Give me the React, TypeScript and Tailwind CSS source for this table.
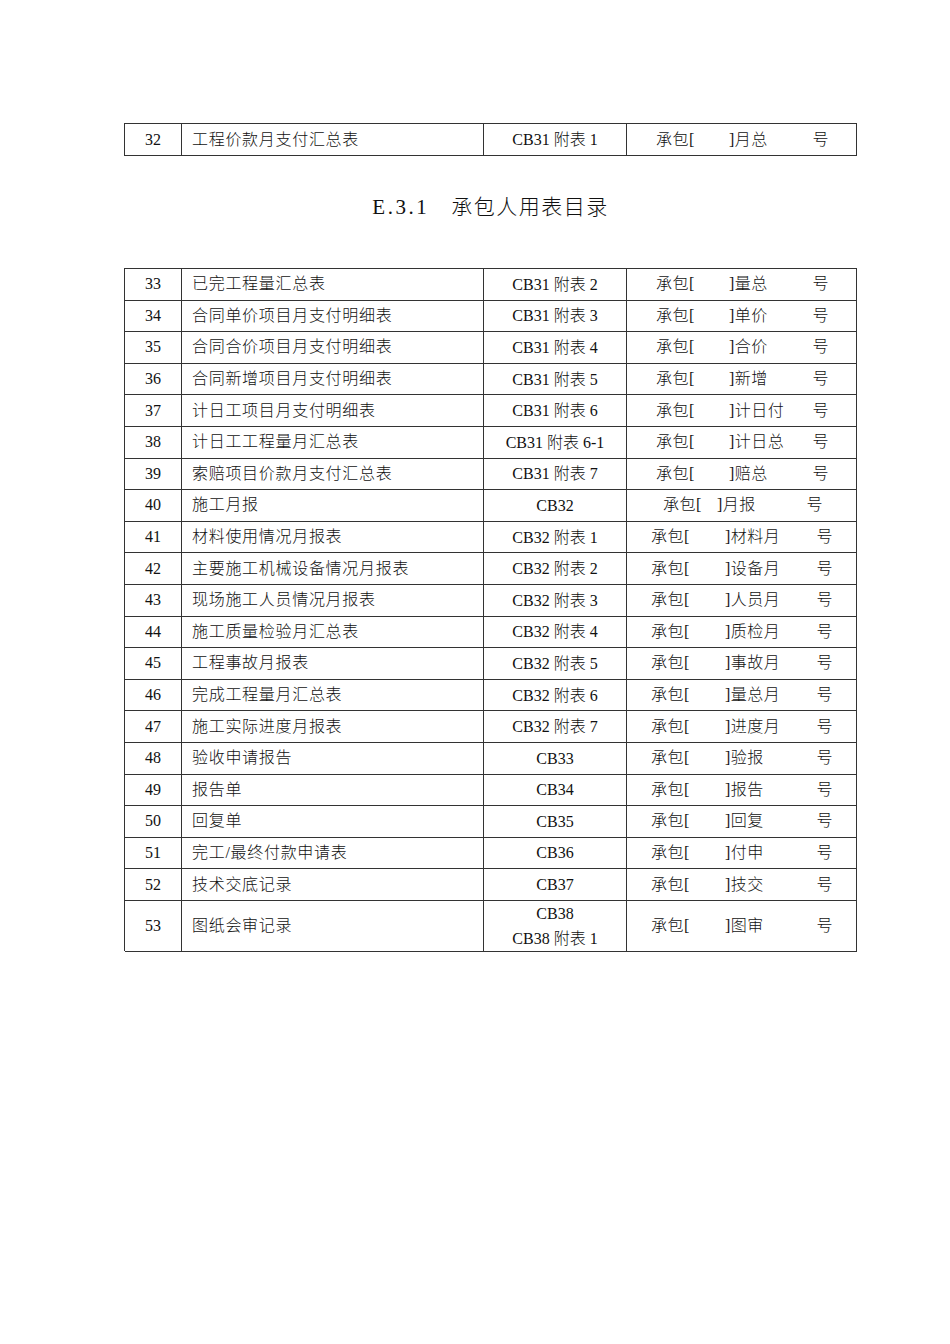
import React from "react";

type Row = { n: number; name: string; code: string[]; tag: string; v: "A" | "B" | "C" };

const rows: Row[] = [
  { n: 33, name: "已完工程量汇总表", code: ["CB31 附表 2"], tag: "量总", v: "A" },
  { n: 34, name: "合同单价项目月支付明细表", code: ["CB31 附表 3"], tag: "单价", v: "A" },
  { n: 35, name: "合同合价项目月支付明细表", code: ["CB31 附表 4"], tag: "合价", v: "A" },
  { n: 36, name: "合同新增项目月支付明细表", code: ["CB31 附表 5"], tag: "新增", v: "A" },
  { n: 37, name: "计日工项目月支付明细表", code: ["CB31 附表 6"], tag: "计日付", v: "A" },
  { n: 38, name: "计日工工程量月汇总表", code: ["CB31 附表 6-1"], tag: "计日总", v: "A" },
  { n: 39, name: "索赔项目价款月支付汇总表", code: ["CB31 附表 7"], tag: "赔总", v: "A" },
  { n: 40, name: "施工月报", code: ["CB32"], tag: "月报", v: "C" },
  { n: 41, name: "材料使用情况月报表", code: ["CB32 附表 1"], tag: "材料月", v: "B" },
  { n: 42, name: "主要施工机械设备情况月报表", code: ["CB32 附表 2"], tag: "设备月", v: "B" },
  { n: 43, name: "现场施工人员情况月报表", code: ["CB32 附表 3"], tag: "人员月", v: "B" },
  { n: 44, name: "施工质量检验月汇总表", code: ["CB32 附表 4"], tag: "质检月", v: "B" },
  { n: 45, name: "工程事故月报表", code: ["CB32 附表 5"], tag: "事故月", v: "B" },
  { n: 46, name: "完成工程量月汇总表", code: ["CB32 附表 6"], tag: "量总月", v: "B" },
  { n: 47, name: "施工实际进度月报表", code: ["CB32 附表 7"], tag: "进度月", v: "B" },
  { n: 48, name: "验收申请报告", code: ["CB33"], tag: "验报", v: "B" },
  { n: 49, name: "报告单", code: ["CB34"], tag: "报告", v: "B" },
  { n: 50, name: "回复单", code: ["CB35"], tag: "回复", v: "B" },
  { n: 51, name: "完工/最终付款申请表", code: ["CB36"], tag: "付申", v: "B" },
  { n: 52, name: "技术交底记录", code: ["CB37"], tag: "技交", v: "B" },
  { n: 53, name: "图纸会审记录", code: ["CB38", "CB38 附表 1"], tag: "图审", v: "B" },
];

const FONT = { fontFamily: '"Liberation Serif", "Noto Sans CJK SC", serif' } as React.CSSProperties;

function Code({ text }: { text: string }) {
  return <div className="leading-[25px] whitespace-pre">{text}</div>;
}

function Tag({ tag, v }: { tag: string; v: "A" | "B" | "C" }) {
  if (v === "C") {
    return (
      <div className="flex w-full items-center pl-[36px] pr-[33px]">
        <span className="w-[54px] shrink-0">承包[</span>
        <span>]{tag}</span>
        <span className="ml-auto">号</span>
      </div>
    );
  }
  if (v === "A") {
    return (
      <div className="flex w-full items-center pl-[29px] pr-[27px]">
        <span className="w-[73px] shrink-0">承包[</span>
        <span>]{tag}</span>
        <span className="ml-auto">号</span>
      </div>
    );
  }
  return (
    <div className="flex w-full items-center pl-[24px] pr-[23px]">
      <span className="w-[74px] shrink-0">承包[</span>
      <span>]{tag}</span>
      <span className="ml-auto">号</span>
    </div>
  );
}

function TableRow({ r, h }: { r: Row; h: string }) {
  return (
    <div className={`grid grid-cols-[57px_302px_143px_230px] ${h}`}>
      <div className="flex items-center justify-center border-r border-b border-[#333]">{r.n}</div>
      <div className="flex items-center pl-[10px] border-r border-b border-[#333] tracking-[0.7px]">{r.name}</div>
      <div className="flex flex-col items-center justify-center border-r border-b border-[#333]">
        {r.code.map((c) => (
          <Code key={c} text={c} />
        ))}
      </div>
      <div className="flex items-center border-r border-b border-[#333] tracking-[0.5px]">
        <Tag tag={r.tag} v={r.v} />
      </div>
    </div>
  );
}

export default function App() {
  return (
    <div className="w-[950px] h-[1344px] bg-white text-[#111] text-[16px] font-light" style={FONT}>
      <div className="pt-[123px] pl-[124px]">
        <div className="w-[733px] border-l border-t border-[#333]">
          <TableRow
            r={{ n: 32, name: "工程价款月支付汇总表", code: ["CB31 附表 1"], tag: "月总", v: "A" }}
            h="h-[32px]"
          />
        </div>
        <div className="w-[733px] h-[112px] pt-[37px]">
          <div className="h-[30px] flex items-center justify-center text-[21px]">
            <span className="tracking-[2.5px]">E.3.1</span>
            <span className="ml-[22px] tracking-[1.5px]">承包人用表目录</span>
          </div>
        </div>
        <div className="w-[733px] border-l border-t border-[#333]">
          {rows.map((r) => (
            <TableRow key={r.n} r={r} h={r.n === 53 ? "h-[50px]" : "h-[31.6px]"} />
          ))}
        </div>
      </div>
    </div>
  );
}
